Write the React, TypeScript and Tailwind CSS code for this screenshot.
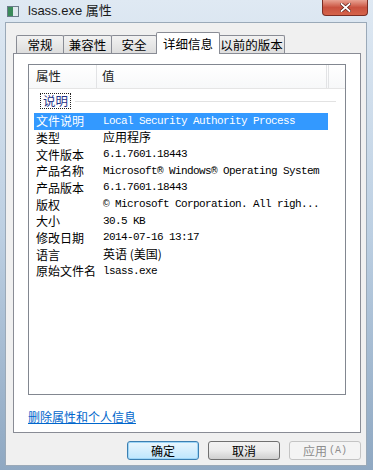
import React from "react"

const cjk = { fontFamily: '"Noto Sans CJK SC", "Liberation Sans", sans-serif' }
const mono = { fontFamily: '"Liberation Mono", "Noto Sans CJK SC", monospace' }

const rows: { label: string; value: React.ReactNode }[] = [
  { label: "文件说明", value: "Local Security Authority Process" },
  { label: "类型", value: <span style={cjk} className="text-[12px] tracking-normal">应用程序</span> },
  { label: "文件版本", value: "6.1.7601.18443" },
  { label: "产品名称", value: "Microsoft® Windows® Operating System" },
  { label: "产品版本", value: "6.1.7601.18443" },
  { label: "版权", value: "© Microsoft Corporation. All righ..." },
  { label: "大小", value: "30.5 KB" },
  { label: "修改日期", value: "2014-07-16 13:17" },
  {
    label: "语言",
    value: (
      <span style={cjk} className="text-[12px] tracking-normal">
        英语 (美国)
      </span>
    ),
  },
  { label: "原始文件名", value: "lsass.exe" },
]

const tabs = [
  { name: "常规", w: "w-[48px]" },
  { name: "兼容性", w: "w-[49px]" },
  { name: "安全", w: "w-[46px]" },
  { name: "详细信息", w: "w-[64px]", active: true },
  { name: "以前的版本", w: "w-[67px]" },
]

const Btn = ({ children, primary, disabled }: { children: React.ReactNode; primary?: boolean; disabled?: boolean }) => (
  <div
    style={cjk}
    className={
      "w-[72px] h-[19px] rounded-[3px] border flex items-center justify-center text-[12px] leading-none " +
      (disabled
        ? "border-[#c4c4c4] bg-[#f4f4f4] text-[#8d8d8d]"
        : primary
          ? "border-[#3c7fb1] bg-gradient-to-b from-[#eaf6fd] to-[#bee6fd] text-black shadow-[inset_0_0_0_1px_#9fd6f7]"
          : "border-[#707070] bg-gradient-to-b from-[#f2f2f2] via-[#ebebeb] to-[#cfcfcf] text-black")
    }
  >
    {children}
  </div>
)

export default function App() {
  return (
    <div className="w-[373px] h-[470px] overflow-hidden bg-gradient-to-b from-[#dfe9f3] via-[#bccfe2] to-[#8fa8c2] flex flex-col">
      {/* title bar */}
      <div className="h-[22px] flex items-start relative">
        <div className="ml-[7px] mt-[6px] w-[12px] h-[11px] border border-[#6b7b8a] bg-[#f5f8fa] flex">
          <div className="w-[5px] h-full bg-[#3a8a5a]" />
          <div className="flex-1 bg-[#dfe8ee]" />
        </div>
        <span
          style={{ fontFamily: '"Liberation Sans", "Noto Sans CJK SC", sans-serif' }}
          className="ml-[9px] mt-[3px] text-[13px] text-[#1a1a1a] leading-[16px]"
        >
          lsass.exe 属性
        </span>
        <div className="absolute left-[322px] top-0 w-[46px] h-[16px] rounded-b-[4px] border border-t-0 border-[#7a2d24] bg-gradient-to-b from-[#e8a293] via-[#c9513f] to-[#d5644a] flex items-center justify-center">
          <svg width="11" height="9" viewBox="0 0 11 9">
            <path d="M1.5 1 L9.5 8 M9.5 1 L1.5 8" stroke="#5a1c14" strokeWidth="3.2" strokeLinecap="square" />
            <path d="M1.5 1 L9.5 8 M9.5 1 L1.5 8" stroke="#fff" strokeWidth="1.8" strokeLinecap="square" />
          </svg>
        </div>
      </div>

      {/* client area */}
      <div className="ml-[5px] w-[362px] h-[444px] bg-[#f0f0f0] border border-[#9aa9b8] flex flex-col">
        {/* tabs */}
        <div className="ml-[8px] mt-[9px] h-[22px] flex items-end">
          {tabs.map((t, i) =>
            t.active ? (
              <div
                key={t.name}
                style={cjk}
                className={`${t.w} h-[22px] -ml-[1px] -mr-[1px] border border-b-0 border-[#898c95] bg-white text-[12.5px] text-black flex items-start justify-center pt-[2px] relative z-10 rounded-t-[2px]`}
              >
                {t.name}
              </div>
            ) : (
              <div
                key={t.name}
                style={cjk}
                className={`${t.w} h-[19px] border border-b-0 ${i === 0 ? "ml-[2px]" : "-ml-[1px]"} border-[#898c95] bg-gradient-to-b from-[#f2f2f2] to-[#dcdcdc] text-[12.5px] text-black flex items-center justify-center rounded-t-[2px]`}
              >
                {t.name}
              </div>
            )
          )}
        </div>

        {/* tab panel */}
        <div className="ml-[7px] w-[348px] h-[380px] -mt-[1px] border border-[#898c95] bg-white flex flex-col">
          {/* list box */}
          <div className="ml-[14px] mt-[10px] w-[318px] h-[331px] border border-[#828790] bg-white flex flex-col">
            {/* header */}
            <div style={cjk} className="h-[24px] flex items-center text-[12.5px] text-[#1e1e1e] bg-gradient-to-b from-white to-[#f7f8f9] border-b border-[#e5e5e5]">
              <div className="w-[68px] pl-[7px] h-full flex items-center border-r border-[#e2e3e5]">属性</div>
              <div className="w-[230px] pl-[5px] h-full flex items-center border-r border-[#e2e3e5]">值</div>
              <div className="w-[2px] h-full border-r border-[#e2e3e5]" />
            </div>
            {/* group */}
            <div className="h-[24px] flex items-center pl-[11px] pr-[9px]">
              <span
                style={cjk}
                className="text-[12.5px] text-[#1e3287] px-[2px] leading-[14px] border border-dotted border-[#222]"
              >
                说明
              </span>
              <div className="flex-1 ml-[4px] h-px bg-[#e2e2e2]" />
            </div>
            {/* rows */}
            <div className="flex flex-col">
              {rows.map((r, i) => (
                <div
                  key={r.label}
                  className={
                    "ml-[5px] w-[294px] h-[16.67px] flex items-center " +
                    (i === 0 ? "bg-[#3399ff] text-white" : "text-black")
                  }
                >
                  <span style={cjk} className="w-[69px] pl-[2px] text-[12px] leading-none whitespace-nowrap">
                    {r.label}
                  </span>
                  <span style={mono} className="text-[11px] leading-none whitespace-nowrap tracking-[-0.6px]">
                    {r.value}
                  </span>
                </div>
              ))}
            </div>
          </div>
          {/* link */}
          <div className="ml-[14px] mt-[9px]">
            <span style={cjk} className="text-[12px] text-[#0066cc] underline leading-none">
              删除属性和个人信息
            </span>
          </div>
        </div>

        {/* buttons */}
        <div className="mt-[8px] ml-[121px] flex gap-[9px]">
          <Btn primary>确定</Btn>
          <Btn>取消</Btn>
          <Btn disabled>
            应用 <span style={mono} className="text-[10px] ml-[2px]">(A)</span>
          </Btn>
        </div>
      </div>
    </div>
  )
}
